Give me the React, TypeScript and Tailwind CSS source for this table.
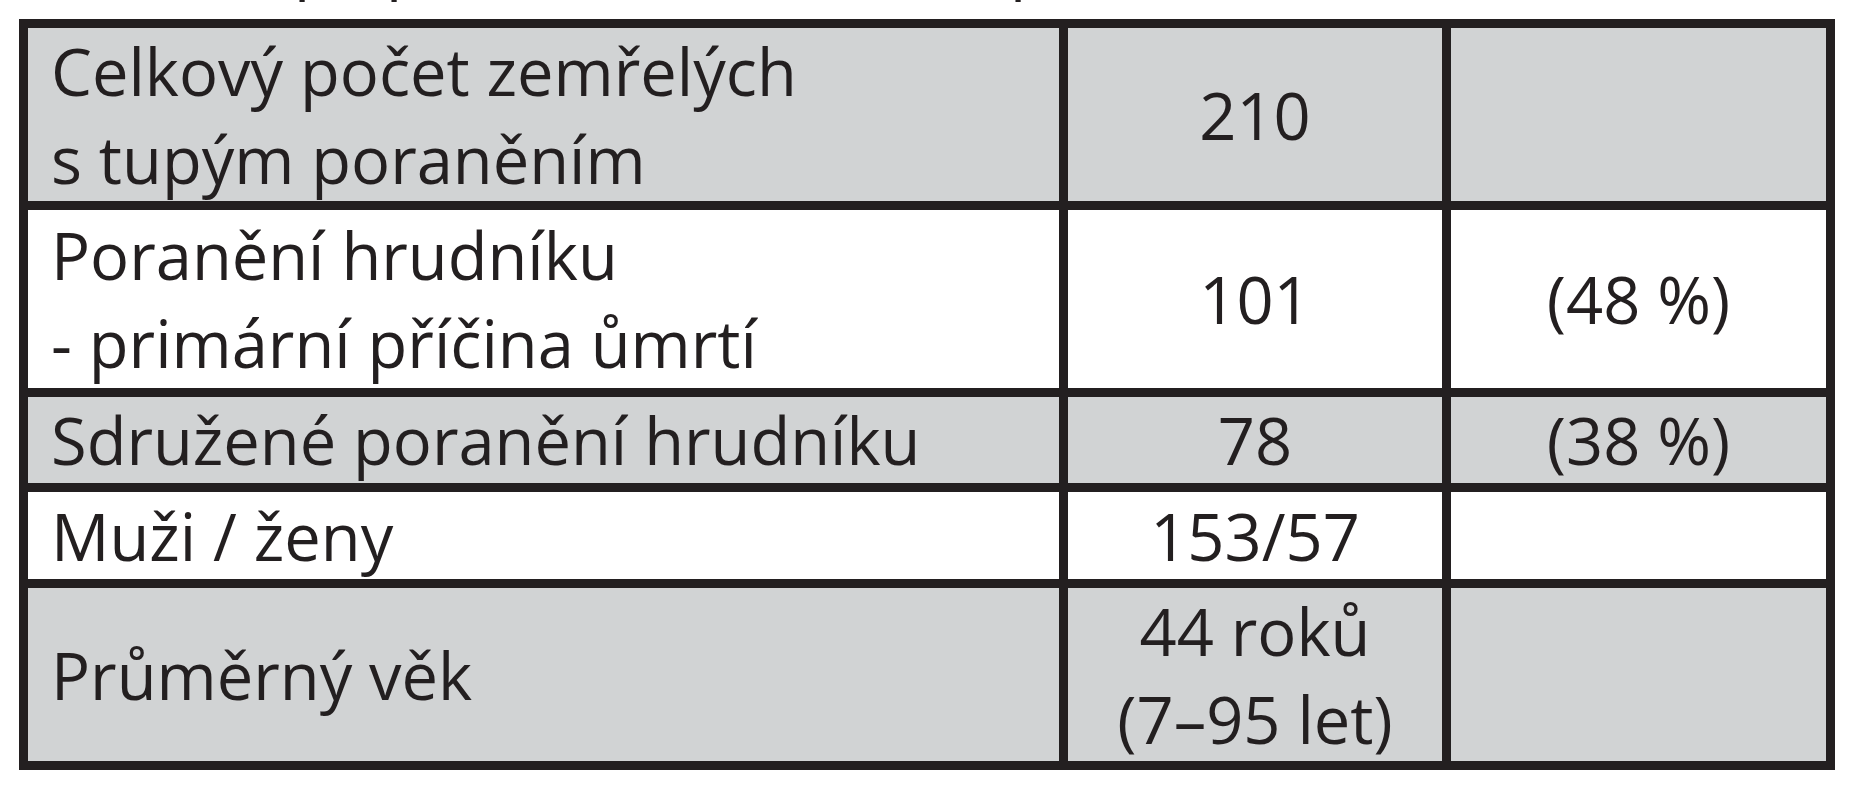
import React from "react";

const gray = "bg-[#d1d3d4]";
const white = "bg-white";

function Cell({
  bg,
  align = "left",
  children,
}: {
  bg: string;
  align?: "left" | "center";
  children?: React.ReactNode;
}) {
  return (
    <div
      className={`${bg} flex flex-col justify-center ${
        align === "center" ? "items-center text-center" : "items-start text-left pl-[23px]"
      }`}
    >
      {children}
    </div>
  );
}

export default function App() {
  return (
    <div
      className="w-[1854px] h-[800px] bg-white text-[#231f20] text-[65px] leading-[88px]"
      style={{ fontFamily: '"Open Sans", "Noto Sans", sans-serif' }}
    >
      <div className="h-[19px] overflow-hidden">
        <div className="-mt-[72px] leading-[70px] text-[64px] flex whitespace-pre pl-[294px]">
          <span className="inline-block w-[92px]">p</span>
          <span className="inline-block w-[624px]">p</span>
          <span className="inline-block">p</span>
        </div>
      </div>
      <div className="ml-[19px] w-[1816px] bg-[#231f20] p-[9px] grid grid-cols-[1031px_374px_375px] grid-rows-[173px_178px_86px_87px_173px] gap-[9px]">
        <Cell bg={gray}>
          <span>Celkový počet zemřelých</span>
          <span>s tupým poraněním</span>
        </Cell>
        <Cell bg={gray} align="center">
          210
        </Cell>
        <Cell bg={gray} align="center" />

        <Cell bg={white}>
          <span>Poranění hrudníku</span>
          <span>- primární příčina ůmrtí</span>
        </Cell>
        <Cell bg={white} align="center">
          101
        </Cell>
        <Cell bg={white} align="center">
          (48 %)
        </Cell>

        <Cell bg={gray}>Sdružené poranění hrudníku</Cell>
        <Cell bg={gray} align="center">
          78
        </Cell>
        <Cell bg={gray} align="center">
          (38 %)
        </Cell>

        <Cell bg={white}>Muži / ženy</Cell>
        <Cell bg={white} align="center">
          153/57
        </Cell>
        <Cell bg={white} align="center" />

        <Cell bg={gray}>Průměrný věk</Cell>
        <Cell bg={gray} align="center">
          <span>44 roků</span>
          <span>(7–95 let)</span>
        </Cell>
        <Cell bg={gray} align="center" />
      </div>
    </div>
  );
}
